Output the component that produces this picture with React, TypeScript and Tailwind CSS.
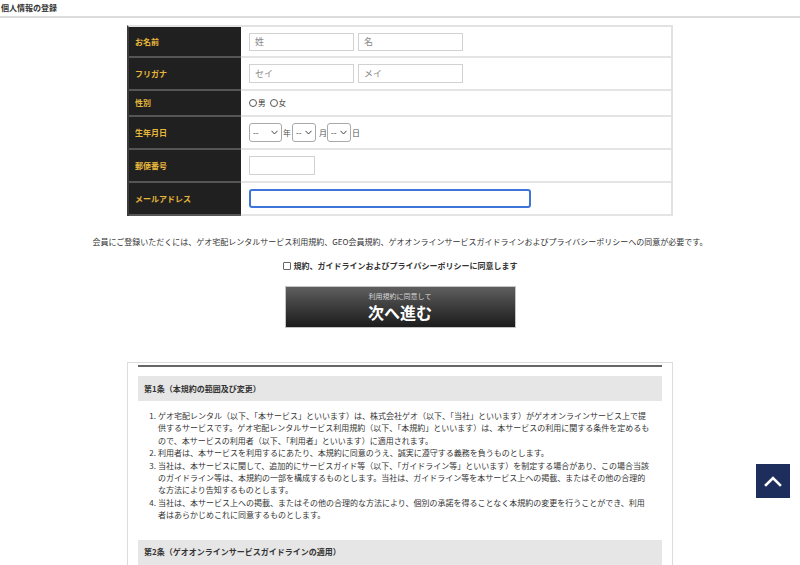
import React from "react";

function Row({
  label,
  h,
  children,
}: {
  label: string;
  h: string;
  children: React.ReactNode;
}) {
  return (
    <div className={"flex " + h}>
      <div className="w-[112px] shrink-0 bg-[#202020] border-b-2 border-[#555555] flex items-center pl-[6px] text-[#e6b73c] text-[8px] font-bold">
        {label}
      </div>
      <div className="flex-1 border-b-2 border-[#e4e4e4] flex items-center pl-[8px]">
        {children}
      </div>
    </div>
  );
}

function Sel({ w }: { w: string }) {
  return (
    <div className={"relative h-[19px] border border-[#a9a9a9] rounded-[3px] bg-white " + w}>
      <span className="absolute left-[3px] top-[3px] text-[8px] leading-[11px] text-[#333]">--</span>
      <svg className="absolute right-[3px] top-[6px]" width="7" height="5" viewBox="0 0 7 5">
        <polyline points="0.5,0.8 3.5,4 6.5,0.8" fill="none" stroke="#444" strokeWidth="1" />
      </svg>
    </div>
  );
}

function Radio({ label }: { label: string }) {
  return (
    <span className="flex items-center">
      <span className="w-[8px] h-[8px] rounded-full border border-[#555] bg-white" />
      <span className="text-[7.5px] text-[#333] ml-[1px]">{label}</span>
    </span>
  );
}

export default function App() {
  return (
    <div className="relative h-[565px] overflow-hidden bg-white text-[#333] font-['Noto_Sans_CJK_JP',sans-serif]">
      <div className="h-[18px] border-b-2 border-[#dcdcdc] text-[8px] font-bold leading-[16px] pl-[1px] text-[#333]">
        個人情報の登録
      </div>

      <div className="mx-auto mt-[7px] w-[546px] border-t-2 border-x-2 border-[#e2e2e2] border-l-[#3c3c3c]">
        <Row label="お名前" h="h-[31px]">
          <div className="flex gap-[4px]">
            <input
              placeholder="姓"
              className="w-[105px] h-[18px] border border-[#d2d2d2] px-[5px] text-[9px] placeholder:text-[#888] outline-none"
            />
            <input
              placeholder="名"
              className="w-[105px] h-[18px] border border-[#d2d2d2] px-[5px] text-[9px] placeholder:text-[#888] outline-none"
            />
          </div>
        </Row>
        <Row label="フリガナ" h="h-[33px]">
          <div className="flex gap-[4px]">
            <input
              placeholder="セイ"
              className="w-[105px] h-[19px] border border-[#d2d2d2] px-[5px] text-[9px] placeholder:text-[#888] outline-none"
            />
            <input
              placeholder="メイ"
              className="w-[105px] h-[19px] border border-[#d2d2d2] px-[5px] text-[9px] placeholder:text-[#888] outline-none"
            />
          </div>
        </Row>
        <Row label="性別" h="h-[26px]">
          <div className="flex items-center gap-[4px]">
            <Radio label="男" />
            <Radio label="女" />
          </div>
        </Row>
        <Row label="生年月日" h="h-[33px]">
          <div className="flex items-center text-[8px] text-[#555]">
            <Sel w="w-[33px]" />
            <span className="ml-[1px] mr-[1px]">年</span>
            <Sel w="w-[24px]" />
            <span className="ml-[3px] mr-[0px]">月</span>
            <Sel w="w-[24px]" />
            <span className="ml-[1px]">日</span>
          </div>
        </Row>
        <Row label="郵便番号" h="h-[33px]">
          <input className="w-[66px] h-[19px] border border-[#d2d2d2] outline-none" />
        </Row>
        <Row label="メールアドレス" h="h-[33px]">
          <input className="w-[282px] h-[19px] border-2 border-[#3f74d8] rounded-[3px] outline-none" />
        </Row>
      </div>

      <p className="mt-[20px] text-center text-[8px] leading-[12px] text-[#333]">
        会員にご登録いただくには、ゲオ宅配レンタルサービス利用規約、GEO会員規約、ゲオオンラインサービスガイドラインおよびプライバシーポリシーへの同意が必要です。
      </p>

      <div className="mt-[12px] flex justify-center items-center gap-[3px]">
        <span className="w-[8px] h-[8px] border border-[#666] rounded-[1px] bg-white" />
        <span className="text-[8px] font-bold leading-[12px] text-[#333]">
          規約、ガイドラインおよびプライバシーポリシーに同意します
        </span>
      </div>

      <button className="mx-auto mt-[14px] flex flex-col items-center w-[231px] h-[42px] border border-[#c4c4c4] bg-linear-to-b from-[#5f5f5f] via-[#3c3c3c] to-[#1c1c1c]">
        <span className="mt-[5px] text-[7px] leading-[8px] text-[#d8d8d8]">利用規約に同意して</span>
        <span className="mt-[3px] text-[16px] leading-[18px] font-bold text-white">次へ進む</span>
      </button>

      <div className="mx-auto mt-[34px] w-[546px] border border-[#dcdcdc] px-[10px] pt-[2px] pb-[20px]">
        <div className="h-[2px] bg-[#666666]" />
        <div className="mt-[9px] h-[25px] bg-[#e6e6e6] flex items-center pl-[6px] text-[8px] font-bold text-[#333]">
          第1条（本規約の範囲及び変更）
        </div>
        <ol className="mt-[9px] text-[8px] leading-[12.4px] text-[#333]">
          <li className="flex">
            <span className="w-[20px] shrink-0 text-right pr-[2px]">1.</span>
            <span className="w-[498px]">
              ゲオ宅配レンタル（以下、「本サービス」といいます）は、株式会社ゲオ（以下、「当社」といいます）がゲオオンラインサービス上で提
              <br />
              供するサービスです。ゲオ宅配レンタルサービス利用規約（以下、「本規約」といいます）は、本サービスの利用に関する条件を定めるも
              <br />
              ので、本サービスの利用者（以下、「利用者」といいます）に適用されます。
            </span>
          </li>
          <li className="flex">
            <span className="w-[20px] shrink-0 text-right pr-[2px]">2.</span>
            <span className="w-[498px]">
              利用者は、本サービスを利用するにあたり、本規約に同意のうえ、誠実に遵守する義務を負うものとします。
            </span>
          </li>
          <li className="flex">
            <span className="w-[20px] shrink-0 text-right pr-[2px]">3.</span>
            <span className="w-[498px]">
              当社は、本サービスに関して、追加的にサービスガイド等（以下、「ガイドライン等」といいます）を制定する場合があり、この場合当該
              <br />
              のガイドライン等は、本規約の一部を構成するものとします。当社は、ガイドライン等を本サービス上への掲載、またはその他の合理的
              <br />
              な方法により告知するものとします。
            </span>
          </li>
          <li className="flex">
            <span className="w-[20px] shrink-0 text-right pr-[2px]">4.</span>
            <span className="w-[498px]">
              当社は、本サービス上への掲載、またはその他の合理的な方法により、個別の承諾を得ることなく本規約の変更を行うことができ、利用
              <br />
              者はあらかじめこれに同意するものとします。
            </span>
          </li>
        </ol>
        <div className="mt-[18px] h-[25px] bg-[#e6e6e6] flex items-center pl-[6px] text-[8px] font-bold text-[#333]">
          第2条（ゲオオンラインサービスガイドラインの適用）
        </div>
      </div>

      <div className="fixed right-[10px] top-[464px] w-[34px] h-[34px] bg-[#1e2e5c] flex items-center justify-center">
        <svg width="18" height="12" viewBox="0 0 18 12">
          <polyline points="2,10 9,3 16,10" fill="none" stroke="white" strokeWidth="2.6" strokeLinecap="square" />
        </svg>
      </div>
    </div>
  );
}
